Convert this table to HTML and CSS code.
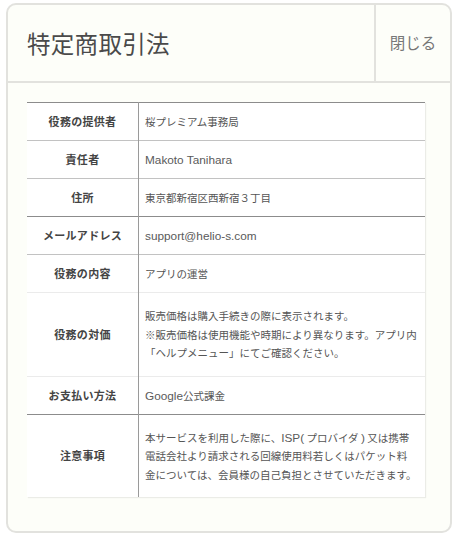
FILE: index.html
```html
<!DOCTYPE html>
<html lang="ja">
<head>
    <meta charset="UTF-8">
    <meta name="viewport" content="width=device-width, initial-scale=1.0">
    <title>特定商取引法</title>
    <link rel="stylesheet" href="styles.css">
</head>
<body>
    <div class="panel">
        <div class="panel-header">
            <h1 class="panel-title">特定商取引法</h1>
            <div class="close-btn">閉じる</div>
        </div>

        <table class="law-table">
            <tr class="line-dark">
                <th>役務の提供者</th>
                <td>桜プレミアム事務局</td>
            </tr>
            <tr>
                <th>責任者</th>
                <td><span class="en">Makoto Tanihara</span></td>
            </tr>
            <tr>
                <th>住所</th>
                <td>東京都新宿区西新宿３丁目</td>
            </tr>
            <tr class="line-dark">
                <th>メールアドレス</th>
                <td><span class="en">support@helio-s.com</span></td>
            </tr>
            <tr>
                <th>役務の内容</th>
                <td>アプリの運営</td>
            </tr>
            <tr class="line-faint multi">
                <th>役務の対価</th>
                <td>販売価格は購入手続きの際に表示されます。<br>※販売価格は使用機能や時期により異なります。アプリ内<br>「ヘルプメニュー」にてご確認ください。</td>
            </tr>
            <tr class="line-faint">
                <th>お支払い方法</th>
                <td><span class="en">Google</span>公式課金</td>
            </tr>
            <tr class="line-dark multi">
                <th>注意事項</th>
                <td>本サービスを利用した際に、<span class="en">ISP(</span> プロバイダ <span class="en">)</span> 又は携帯<br>電話会社より請求される回線使用料若しくはパケット料<br>金については、会員様の自己負担とさせていただきます。</td>
            </tr>
        </table>
    </div>
</body>
</html>
```

FILE: styles.css
```css
body {
    margin: 0;
    padding: 3px 7px 0 6px;
    background: #fff;
    font-family: "Noto Sans CJK JP", "Noto Sans", sans-serif;
}
.panel {
    border: 2px solid #e2e2de;
    border-radius: 10px;
    background: #fdfef9;
    padding-bottom: 34px;
    overflow: hidden;
}
.panel-header {
    display: flex;
    height: 76px;
    border-bottom: 2px solid #e2e2de;
}
.panel-title {
    flex: 1;
    margin: 0;
    padding-left: 19px;
    display: flex;
    align-items: center;
    font-size: 23.5px;
    font-weight: 400;
    color: #4a4a4a;
    letter-spacing: 0.3px;
}
.close-btn {
    width: 74px;
    border-left: 2px solid #e2e2de;
    display: flex;
    align-items: center;
    justify-content: center;
    padding-bottom: 2px;
    font-size: 15.5px;
    color: #777;
}
.law-table {
    width: 398px;
    margin: 19px 0 0 19px;
    border-collapse: collapse;
    background: #fff;
    box-shadow: 1px 1px 1px rgba(0, 0, 0, 0.07);
}
.law-table tr {
    border-top: 1px solid #c2c2c2;
}
.law-table tr.line-dark {
    border-top-color: #8c8c8c;
}
.law-table tr.line-faint {
    border-top-color: #ebebeb;
}
.law-table th {
    width: 111px;
    height: 19px;
    padding: 9px 0;
    border-right: 1px solid #9a9a9a;
    font-size: 11px;
    font-weight: 700;
    line-height: 19px;
    color: #444;
    text-align: center;
    letter-spacing: 0.3px;
}
.law-table td {
    padding: 9px 6px;
    font-size: 10.5px;
    line-height: 19px;
    color: #555;
    text-align: left;
}
.law-table tr.multi td {
    padding: 14px 6px 13px;
    line-height: 18.5px;
}
.en {
    font-family: "Liberation Sans", Arial, sans-serif;
    font-size: 11.8px;
    line-height: 1;
    color: #5a5a5a;
}
```
